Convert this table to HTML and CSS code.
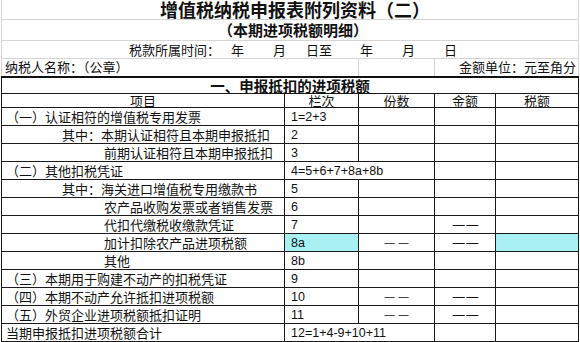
FILE: index.html
```
<!DOCTYPE html>
<html lang="zh-CN">
<head>
<meta charset="utf-8">
<title>增值税纳税申报表附列资料（二）</title>
<link rel="stylesheet" href="styles.css">
</head>
<body>
<table class="sheet">
  <colgroup>
    <col class="c-item"><col class="c-no"><col class="c-cnt"><col class="c-amt"><col class="c-tax">
  </colgroup>
  <tbody>
    <tr class="r-title"><td colspan="5" class="top title">增值税纳税申报表附列资料（二）</td></tr>
    <tr class="r-sub"><td colspan="5" class="top subtitle">（本期进项税额明细）</td></tr>
    <tr class="r-date"><td colspan="5" class="top">
      <div class="date"><span>税款所属时间：</span><span class="g11">年</span><span class="g29">月</span><span class="g20">日至</span><span class="g28">年</span><span class="g29">月</span><span class="g29">日</span></div>
    </td></tr>
    <tr class="r-name">
      <td colspan="2" class="top name">纳税人名称：（公章）</td>
      <td class="top vline"></td>
      <td colspan="2" class="top vline unit">金额单位：元至角分</td>
    </tr>
    <tr class="r-sec"><td colspan="5" class="sec">一、申报抵扣的进项税额</td></tr>
    <tr class="r-head">
      <td class="hd">项目</td><td class="hd">栏次</td><td class="hd">份数</td><td class="hd">金额</td><td class="hd">税额</td>
    </tr>
    <tr><td class="lv0">（一）认证相符的增值税专用发票</td><td class="no">1=2+3</td><td></td><td></td><td></td></tr>
    <tr><td class="lv1">其中：本期认证相符且本期申报抵扣</td><td class="no">2</td><td></td><td></td><td></td></tr>
    <tr><td class="lv2">前期认证相符且本期申报抵扣</td><td class="no">3</td><td></td><td></td><td></td></tr>
    <tr><td class="lv0">（二）其他扣税凭证</td><td colspan="2" class="no">4=5+6+7+8a+8b</td><td></td><td></td></tr>
    <tr><td class="lv1">其中：海关进口增值税专用缴款书</td><td class="no">5</td><td></td><td></td><td></td></tr>
    <tr><td class="lv2">农产品收购发票或者销售发票</td><td class="no">6</td><td></td><td></td><td></td></tr>
    <tr><td class="lv2">代扣代缴税收缴款凭证</td><td class="no">7</td><td></td><td class="dash dash-w">— —</td><td></td></tr>
    <tr><td class="lv2">加计扣除农产品进项税额</td><td class="no cyan">8a</td><td class="dash">— —</td><td class="dash dash-w">— —</td><td class="cyan"></td></tr>
    <tr><td class="lv2">其他</td><td class="no">8b</td><td></td><td></td><td></td></tr>
    <tr><td class="lv0">（三）本期用于购建不动产的扣税凭证</td><td class="no">9</td><td></td><td></td><td></td></tr>
    <tr><td class="lv0">（四）本期不动产允许抵扣进项税额</td><td class="no">10</td><td class="dash">— —</td><td class="dash dash-w">— —</td><td></td></tr>
    <tr><td class="lv0">（五）外贸企业进项税额抵扣证明</td><td class="no">11</td><td class="dash">— —</td><td class="dash dash-w">— —</td><td></td></tr>
    <tr><td class="lv0">当期申报抵扣进项税额合计</td><td colspan="2" class="no">12=1+4-9+10+11</td><td></td><td></td></tr>
  </tbody>
</table>
</body>
</html>
```

FILE: styles.css
```
html, body {
  margin: 0;
  padding: 0;
  background: #ffffff;
}
body {
  font-family: "Noto Sans CJK SC", "Noto Sans CJK JP", sans-serif;
  color: #111111;
  width: 580px;
  height: 342px;
  overflow: hidden;
}
.sheet {
  border-collapse: collapse;
  table-layout: fixed;
  width: 578px;
  margin-left: 1px;
}
.c-item { width: 283px; }
.c-no { width: 74px; }
.c-cnt { width: 76px; }
.c-amt { width: 61px; }
.c-tax { width: 83px; }

td {
  padding: 0;
  font-size: 13px;
  line-height: 16px;
  white-space: nowrap;
  border: 1px solid #1a1a1a;
}

/* top (non-table) area with light gridlines */
td.top {
  border: none;
  border-bottom: 1px solid #d6d6d6;
  border-left: 1px solid #d6d6d6;
  border-right: 1px solid #d6d6d6;
}
.r-title { height: 19px; }
.r-sub { height: 21px; }
.r-date { height: 18px; }
.r-name { height: 18px; }
.title {
  font-size: 18px;
  font-weight: bold;
  line-height: 19px;
  text-align: center;
  padding-left: 10px;
}
.subtitle {
  font-size: 15px;
  font-weight: bold;
  line-height: 20px;
  text-align: center;
  padding-left: 6px;
}
.date {
  display: flex;
  padding-left: 127px;
  line-height: 17px;
}
.g11 { margin-left: 11px; }
.g20 { margin-left: 20px; }
.g28 { margin-left: 28px; }
.g29 { margin-left: 29px; }
.name { padding-left: 3px; }
.unit { text-align: right; padding-right: 2px; }

/* section header */
.r-sec { height: 17px; }
.sec {
  border-top: 2px solid #111;
  font-size: 14.5px;
  font-weight: bold;
  text-align: center;
  line-height: 15px;
}
.r-head { height: 14px; }
.hd {
  text-align: center;
  vertical-align: bottom;
  line-height: 13px;
}

tr { height: 18px; }
.lv0 { padding-left: 4px; }
.lv1 { padding-left: 60px; }
.lv2 { padding-left: 102px; }
.no {
  font-family: "Liberation Sans", sans-serif;
  font-size: 12.5px;
  padding-left: 6px;
}
.dash {
  text-align: center;
  font-family: "Liberation Sans", sans-serif;
  font-size: 10px;
  word-spacing: 1px;
  color: #111;
}
.dash-w {
  font-size: 12px;
  word-spacing: -2px;
  padding-left: 1px;
}
.cyan { background: #a9f0f3; }
```
